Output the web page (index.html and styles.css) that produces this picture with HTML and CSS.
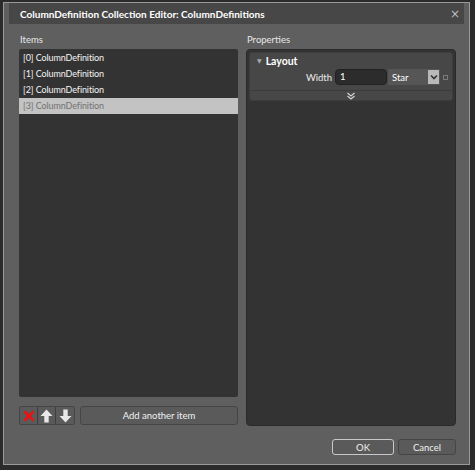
FILE: index.html
```html
<!DOCTYPE html>
<html>
<head>
<meta charset="utf-8">
<link rel="stylesheet" href="styles.css">
</head>
<body>
<div class="window">
  <div class="titlebar">
    <span class="title">ColumnDefinition Collection Editor: ColumnDefinitions</span>
    <span class="close">&#215;</span>
  </div>
  <div class="content">
    <div class="columns">
      <div class="col left">
        <div class="label">Items</div>
        <div class="list">
          <div class="item">[0] ColumnDefinition</div>
          <div class="item">[1] ColumnDefinition</div>
          <div class="item">[2] ColumnDefinition</div>
          <div class="item selected">[3] ColumnDefinition</div>
        </div>
        <div class="toolbar">
          <div class="tools">
            <div class="tool">
              <svg width="12" height="12" viewBox="0 0 12 12"><path d="M1.5 1.5 L10.5 10.5 M10.5 1.5 L1.5 10.5" stroke="#ee1111" stroke-width="2.6"/></svg>
            </div>
            <div class="tool">
              <svg width="13" height="14" viewBox="0 0 13 14"><path d="M6.5 0.5 L12.5 7 L8.7 7 L8.7 13.5 L4.3 13.5 L4.3 7 L0.5 7 Z" fill="#e8e8e8"/></svg>
            </div>
            <div class="tool">
              <svg width="13" height="14" viewBox="0 0 13 14"><path d="M6.5 13.5 L12.5 7 L8.7 7 L8.7 0.5 L4.3 0.5 L4.3 7 L0.5 7 Z" fill="#e8e8e8"/></svg>
            </div>
          </div>
          <div class="btn add">Add another item</div>
        </div>
      </div>
      <div class="col right">
        <div class="label">Properties</div>
        <div class="panel">
          <div class="section">
            <div class="sec-head"><span class="tri">&#9660;</span><span class="sec-title">Layout</span></div>
            <div class="prop-row">
              <span class="prop-name">Width</span>
              <div class="input">1</div>
              <div class="combo"><span>Star</span>
                <div class="drop"><svg width="8" height="6" viewBox="0 0 8 6"><path d="M1 1.5 L4 4.5 L7 1.5" stroke="#333" stroke-width="1.6" fill="none"/></svg></div>
              </div>
              <div class="marker"></div>
            </div>
            <div class="expander">
              <svg width="10" height="8" viewBox="0 0 10 8"><path d="M1.5 1 L5 4 L8.5 1 M1.5 4 L5 7 L8.5 4" stroke="#d0d0d0" stroke-width="1.3" fill="none"/></svg>
            </div>
          </div>
        </div>
      </div>
    </div>
    <div class="footer">
      <div class="btn ok">OK</div>
      <div class="btn cancel">Cancel</div>
    </div>
  </div>
</div>
</body>
</html>
```
FILE: styles.css
```css
* { box-sizing: border-box; }
html, body { margin: 0; padding: 0; }
body {
  background: #2b2b2b;
  width: 475px;
  height: 470px;
  font-family: Lato, "Open Sans", "Liberation Sans", sans-serif;
  font-size: 9.5px;
  color: #f0f0f0;
  padding: 2px 5px 5px 3px;
}
.window {
  width: 467px;
  height: 463px;
  border: 1px solid #9a9a9a;
  background: #5f5f5f;
  padding: 0 5px 5px 5px;
  display: flex;
  flex-direction: column;
}
.titlebar {
  height: 21px;
  background: #474747;
  display: flex;
  align-items: center;
  justify-content: space-between;
  padding: 0 4px 0 11px;
  flex: none;
}
.title {
  font-weight: 700;
  font-size: 10px;
  color: #ffffff;
}
.close {
  color: #bdbdbd;
  font-size: 12px;
  font-family: "DejaVu Sans", sans-serif;
}
.content {
  flex: 1;
  padding: 10px 8px 0 10px;
  display: flex;
  flex-direction: column;
}
.columns {
  display: flex;
  gap: 8px;
  height: 392px;
}
.col {
  display: flex;
  flex-direction: column;
}
.left { width: 219px; }
.right { width: 210px; }
.label {
  height: 15px;
  line-height: 12px;
  color: #e8e8e8;
  padding-left: 1px;
}
.list {
  flex: 1;
  background: #333333;
  border-radius: 2px;
  padding-top: 1px;
}
.item {
  height: 16px;
  line-height: 15px;
  padding-left: 4px;
  color: #f4f4f4;
  font-size: 9px;
  letter-spacing: -0.1px;
}
.item.selected {
  background: #c3c3c3;
  color: #737373;
}
.toolbar {
  display: flex;
  gap: 5px;
  margin-top: 9px;
  height: 19px;
  margin-bottom: 1px;
}
.tools {
  display: flex;
  border: 1px solid #454545;
  border-radius: 2px;
  background: #5a5a5a;
}
.tool {
  width: 18px;
  display: flex;
  align-items: center;
  justify-content: center;
  border-right: 1px solid #3f3f3f;
}
.tool:last-child { border-right: none; }
.btn {
  background: #5a5a5a;
  border: 1px solid #454545;
  border-radius: 3px;
  display: flex;
  align-items: center;
  justify-content: center;
  color: #f0f0f0;
}
.add { flex: 1; }
.panel {
  flex: 1;
  background: #333333;
  border: 1px solid #2a2a2a;
  border-radius: 4px;
  padding: 2px;
}
.section {
  background: #474747;
  border-radius: 3px;
  border: 1px solid #3d3d3d;
}
.sec-head {
  height: 15px;
  display: flex;
  align-items: center;
  padding-left: 7px;
}
.tri {
  font-size: 6px;
  color: #aaaaaa;
  margin-right: 4px;
  font-family: "DejaVu Sans", sans-serif;
}
.sec-title {
  font-weight: 700;
  font-size: 10.5px;
  color: #ffffff;
}
.prop-row {
  display: flex;
  align-items: center;
  height: 18px;
}
.prop-name {
  width: 85px;
  text-align: right;
  padding-right: 3px;
  color: #eeeeee;
}
.input {
  width: 52px;
  height: 16px;
  background: #2c2c2c;
  border: 1px solid #222;
  border-radius: 4px;
  padding-left: 4px;
  line-height: 14px;
  color: #fff;
}
.combo {
  width: 52px;
  height: 16px;
  background: #565656;
  margin-left: 1px;
  display: flex;
  align-items: center;
  justify-content: space-between;
  padding-left: 4px;
  color: #fff;
}
.drop {
  width: 11px;
  height: 14px;
  background: #b9b9b9;
  margin-right: 1px;
  display: flex;
  align-items: center;
  justify-content: center;
}
.marker {
  width: 5px;
  height: 5px;
  border: 1px solid #7a7a7a;
  margin-left: 3px;
}
.expander {
  margin-top: 4px;
  border-top: 1px solid #3c3c3c;
  height: 10px;
  display: flex;
  align-items: center;
  justify-content: center;
}
.footer {
  display: flex;
  justify-content: flex-end;
  gap: 4px;
  margin-top: 13px;
}
.ok {
  width: 62px;
  height: 16px;
  border-color: #c8c8c8;
}
.cancel {
  width: 58px;
  height: 16px;
}
```
